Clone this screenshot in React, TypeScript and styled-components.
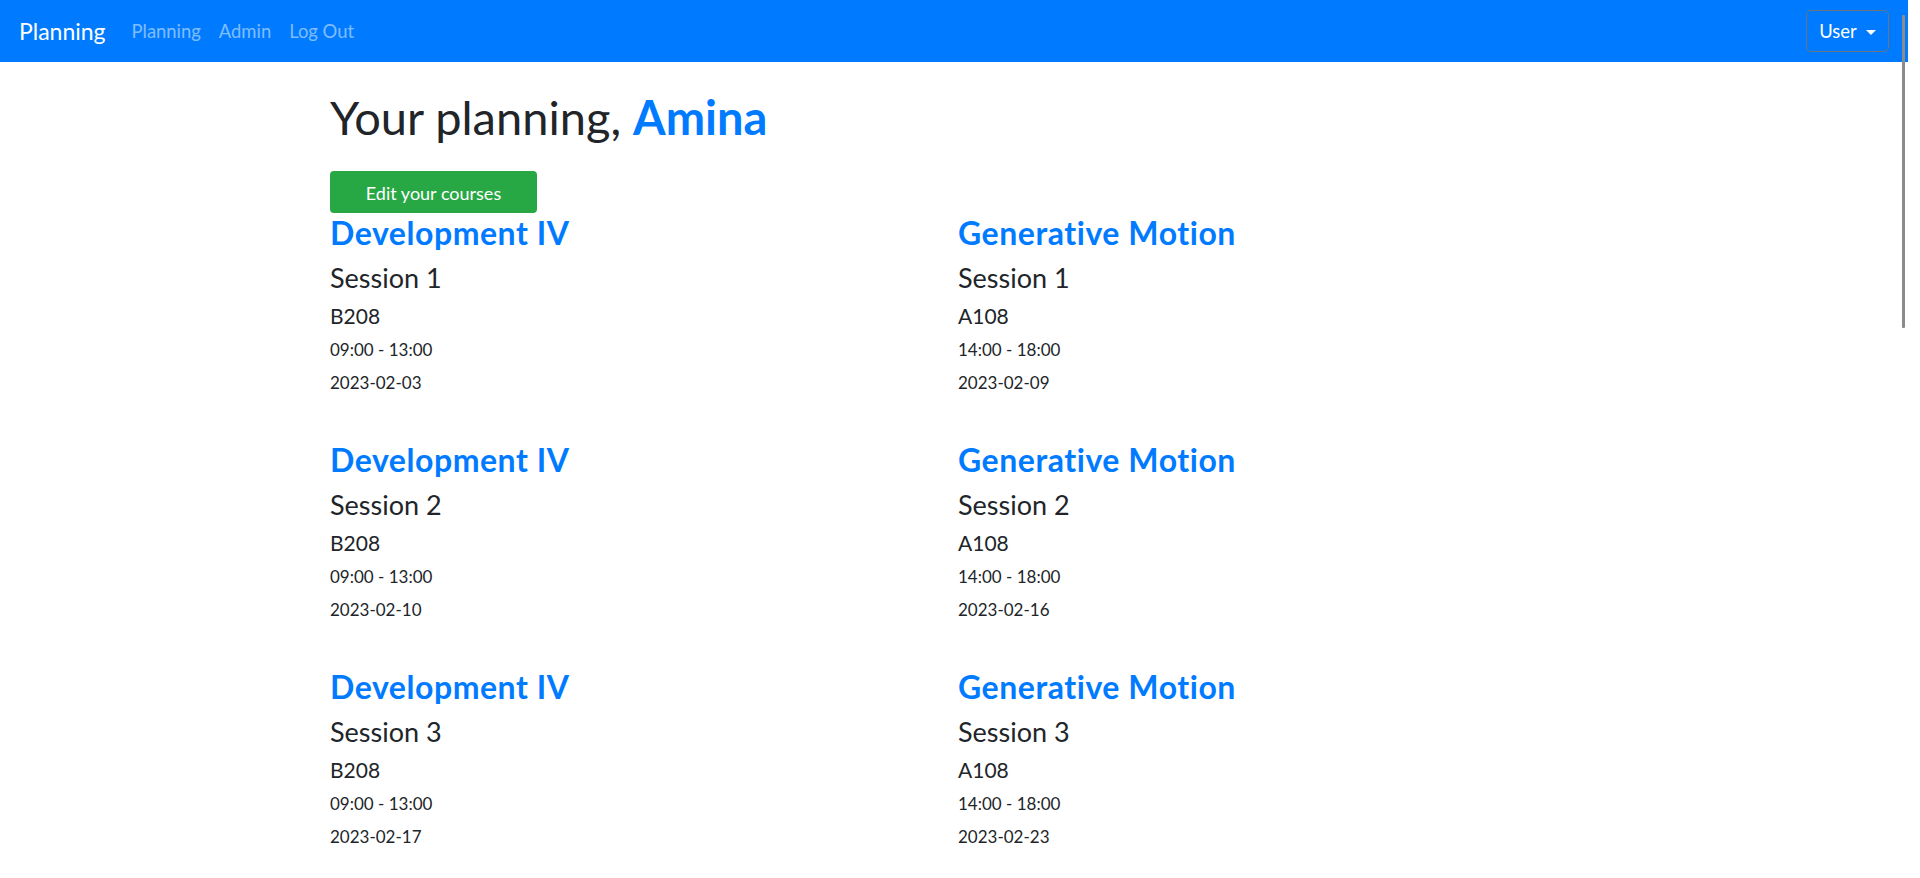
import React from "react";
import styled, { createGlobalStyle } from "styled-components";

const GlobalStyle = createGlobalStyle`
  html, body {
    margin: 0;
    padding: 0;
    background: #ffffff;
    scrollbar-width: none;
  }
  html::-webkit-scrollbar, body::-webkit-scrollbar {
    display: none;
  }
  body {
    font-family: Lato, "Open Sans", "Liberation Sans", sans-serif;
    color: #212529;
  }
  * {
    box-sizing: border-box;
  }
`;

const Page = styled.div`
  width: calc(100% - 12px);
  min-height: 100vh;
  padding-bottom: 40px;
`;

const Navbar = styled.nav`
  height: 62px;
  background-color: #007bff;
  display: flex;
  align-items: center;
  padding: 1px 19px 0;
`;

const Brand = styled.a`
  font-size: 23px;
  color: #ffffff;
  text-decoration: none;
  margin-right: 26px;
  line-height: 1;
`;

const NavLinks = styled.div`
  display: flex;
  gap: 18px;
`;

const NavLink = styled.a`
  font-size: 18.4px;
  color: rgba(255, 255, 255, 0.5);
  text-decoration: none;
  line-height: 1;
`;

const UserButton = styled.button.attrs(() => ({ type: "button" }))`
  margin-left: auto;
  margin-top: -1px;
  width: 83px;
  height: 42px;
  background: transparent;
  border: 1px solid #6c757d;
  border-radius: 5px;
  color: #ffffff;
  font-family: inherit;
  font-size: 18.4px;
  display: flex;
  align-items: center;
  justify-content: center;
  gap: 9px;
  padding: 0;
  cursor: pointer;
`;

const Caret = styled.span`
  width: 0;
  height: 0;
  border-left: 5px solid transparent;
  border-right: 5px solid transparent;
  border-top: 5px solid #ffffff;
  margin-top: 2px;
`;

const Main = styled.main`
  padding-left: 330px;
`;

const Title = styled.h1`
  margin: 26px 0 24px;
  font-size: 47px;
  font-weight: 400;
  line-height: 59px;
`;

const Name = styled.span`
  color: #007bff;
  font-weight: 700;
`;

const EditButton = styled.button.attrs(() => ({ type: "button" }))`
  width: 207px;
  height: 42px;
  border: none;
  border-radius: 4px;
  background-color: #28a745;
  color: #ffffff;
  font-family: inherit;
  font-size: 18px;
  padding: 2px 0 0;
  cursor: pointer;
`;

const Grid = styled.div`
  display: grid;
  grid-template-columns: 628px 628px;
  margin-top: 1px;
`;

const Course = styled.div`
  display: flex;
  flex-direction: column;
  padding-bottom: 46px;
`;

const CourseName = styled.h2`
  margin: 0;
  font-size: 32px;
  font-weight: 700;
  letter-spacing: 0.55px;
  line-height: 37px;
  color: #007bff;
`;

const SessionName = styled.h3`
  margin: 11px 0 0;
  font-size: 27px;
  font-weight: 400;
  line-height: 31px;
`;

const Room = styled.h4`
  margin: 10px 0 0;
  font-size: 21px;
  font-weight: 400;
  line-height: 26px;
`;

const Info = styled.p`
  margin: 9px 0 0;
  font-size: 17px;
  line-height: 24px;
`;

const ScrollThumb = styled.div`
  position: fixed;
  top: 15px;
  left: 1902px;
  width: 3px;
  height: 313px;
  background-color: #8b8b8b;
  border-radius: 1px;
`;

interface Session {
  course: string;
  number: number;
  room: string;
  time: string;
  date: string;
}

const addDays = (start: string, days: number) => {
  const d = new Date(start + "T12:00:00Z");
  d.setUTCDate(d.getUTCDate() + days);
  return d.toISOString().slice(0, 10);
};

const rows = 10;

const sessions: Session[] = [];
for (let i = 0; i < rows; i++) {
  sessions.push({
    course: "Development IV",
    number: i + 1,
    room: "B208",
    time: "09:00 - 13:00",
    date: addDays("2023-02-03", i * 7),
  });
  sessions.push({
    course: "Generative Motion",
    number: i + 1,
    room: "A108",
    time: "14:00 - 18:00",
    date: addDays("2023-02-09", i * 7),
  });
}

export default function App() {
  return (
    <>
      <GlobalStyle />
      <Page>
        <Navbar>
          <Brand href="#">Planning</Brand>
          <NavLinks>
            <NavLink href="#">Planning</NavLink>
            <NavLink href="#">Admin</NavLink>
            <NavLink href="#">Log Out</NavLink>
          </NavLinks>
          <UserButton>
            User
            <Caret />
          </UserButton>
        </Navbar>
        <Main>
          <Title>
            Your planning, <Name>Amina</Name>
          </Title>
          <EditButton>Edit your courses</EditButton>
          <Grid>
            {sessions.map((s) => (
              <Course key={s.course + s.number}>
                <CourseName>{s.course}</CourseName>
                <SessionName>Session {s.number}</SessionName>
                <Room>{s.room}</Room>
                <Info>{s.time}</Info>
                <Info>{s.date}</Info>
              </Course>
            ))}
          </Grid>
        </Main>
      </Page>
      <ScrollThumb />
    </>
  );
}
